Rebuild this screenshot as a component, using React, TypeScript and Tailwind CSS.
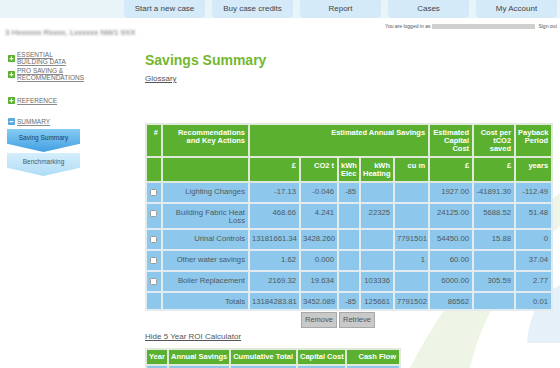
import React from 'react';

const tabs = ['Start a new case', 'Buy case credits', 'Report', 'Cases', 'My Account'];

const rows = [
  { name: ['Lighting Changes'], v: ['-17.13', '-0.046', '-85', '', '', '1927.00', '-41891.30', '-112.49'] },
  { name: ['Building Fabric Heat', 'Loss'], v: ['468.66', '4.241', '', '22325', '', '24125.00', '5688.52', '51.48'] },
  { name: ['Urinal Controls'], v: ['13181661.34', '3428.260', '', '', '7791501', '54450.00', '15.88', '0'] },
  { name: ['Other water savings'], v: ['1.62', '0.000', '', '', '1', '60.00', '', '37.04'] },
  { name: ['Boiler Replacement'], v: ['2169.32', '19.634', '', '103336', '', '6000.00', '305.59', '2.77'] },
];

const totals = ['13184283.81', '3452.089', '-85', '125661', '7791502', '86562', '', '0.01'];

const colWidths = [16, 87, 51, 38, 22, 34, 35, 44, 42, 37];

// celdas de cabecera (verde) y de datos (azul)
const th = 'bg-[#5bb12f] border-2 border-[#dfe9dc] text-white font-bold text-right align-top pt-[4px] pr-[3px] pl-[2px] leading-[8px]';
const td = 'bg-[#8dc7eb] border-2 border-[#e1ebf0] text-[#4f5a60] text-right align-top pt-[5px] pb-[3px] pr-[3px] pl-[2px] leading-[8px]';

const PlusIcon = ({ minus, color }: { minus?: boolean; color: string }) => (
  <svg width="7" height="7" viewBox="0 0 7 7" className="shrink-0">
    <rect x="0" y="0" width="7" height="7" rx="0.8" fill={color} />
    <rect x="1.5" y="3" width="4" height="1.2" fill="#fff" />
    {!minus && <rect x="2.9" y="1.5" width="1.2" height="4" fill="#fff" />}
  </svg>
);

const SideLink = ({ lines, minus, color }: { lines: string[]; minus?: boolean; color: string }) => (
  <div className="flex items-center gap-[2px] ml-[3px]">
    <PlusIcon minus={minus} color={color} />
    <div className="text-[6.5px] leading-[7px] text-[#6a6a6a] uppercase">
      {lines.map(l => (
        <div key={l} className="underline decoration-[#8a8a8a] whitespace-nowrap">{l}</div>
      ))}
    </div>
  </div>
);

const Arrow = ({ label, active }: { label: string; active?: boolean }) => (
  <div
    className={`ml-[2px] w-[73px] h-[23px] pt-[5px] text-center text-[6.5px] leading-[8px] [clip-path:polygon(0_0,100%_0,100%_64%,50%_100%,0_64%)] ${
      active
        ? 'bg-gradient-to-b from-[#86cbf3] to-[#3f9fe2] text-[#1f3f5c]'
        : 'bg-gradient-to-b from-[#d5eefb] to-[#aedcf6] text-[#4a5a66]'
    }`}
  >
    {label}
  </div>
);

export default function App() {
  return (
    <div className="relative w-[560px] h-[368px] overflow-hidden bg-white font-['Liberation_Sans',Arial,sans-serif]">
      {/* fondo decorativo */}
      <svg className="absolute inset-0 pointer-events-none" width="560" height="368" viewBox="0 0 560 368">
        <path d="M565 190 Q470 250 410 368 L470 368 Q490 282 565 222 Z" fill="#eef5e6" />
        <path d="M562 284 Q530 298 527 343 L562 343 Z" fill="#e5f0f8" />
      </svg>

      <div className="relative">
        {/* barra superior */}
        <div className="h-[18px] bg-[#e8f4f8] flex">
          <div className="h-[2px] w-[124px]" />
          <div className="flex gap-[7px]">
            {tabs.map(t => (
              <div key={t} className="w-[81px] h-[18px] rounded-b-[4px] bg-[#d5eaf8] flex items-center justify-center text-[8px] text-[#444]">
                {t}
              </div>
            ))}
          </div>
        </div>

        <div className="flex">
          {/* barra lateral */}
          <div className="w-[145px] shrink-0 pl-[5px]">
            <div className="mt-[11px] h-[8px] text-[8px] leading-[8px] text-[#6f6f6f] blur-[1px] whitespace-nowrap">
              3 Hxxxxxx Rxxxx, Lxxxxxx NW1 9XX
            </div>
            <div className="mt-[14px]">
              <SideLink lines={['Essential', 'Building Data']} color="#5bb12f" />
            </div>
            <div className="mt-[2px]">
              <SideLink lines={['Pro Saving &', 'Recommendations']} color="#5bb12f" />
            </div>
            <div className="mt-[16px]">
              <SideLink lines={['Reference']} color="#5bb12f" />
            </div>
            <div className="mt-[14px]">
              <SideLink lines={['Summary']} minus color="#5aa8de" />
            </div>
            <div className="mt-[4px]">
              <Arrow label="Saving Summary" active />
            </div>
            <div className="mt-[1px]">
              <Arrow label="Benchmarking" />
            </div>
          </div>

          {/* contenido principal */}
          <div className="flex-1 min-w-0">
            <div className="mt-[5px] h-[6px] pl-[240px] flex items-center gap-[2px] text-[5px] leading-[6px] text-[#555] whitespace-nowrap overflow-hidden">
              <span>You are logged in as</span>
              <span className="inline-block w-[103px] h-[5px] bg-[#cfcfcf] blur-[0.6px]" />
              <span className="underline ml-[1px]">Sign out</span>
            </div>

            <h1 className="mt-[23px] text-[14px] leading-[16px] font-bold text-[#73b72f]">Savings Summary</h1>
            <div className="mt-[6px] text-[8px] leading-[10px] text-[#555] underline">Glossary</div>

            <table className="mt-[39px] table-fixed border-collapse w-[406px]">
              <colgroup>
                {colWidths.map((w, i) => (
                  <col key={i} style={{ width: w }} />
                ))}
              </colgroup>
              <thead className="text-[7.5px]">
                <tr className="h-[33px]">
                  <th className={th}>#</th>
                  <th className={th}>Recommendations<br />and Key Actions</th>
                  <th className={th} colSpan={5}>Estimated Annual Savings</th>
                  <th className={th}>Estimated<br />Capital<br />Cost</th>
                  <th className={th}>Cost per<br />tCO2<br />saved</th>
                  <th className={th}>Payback<br />Period</th>
                </tr>
                <tr className="h-[25px]">
                  <th className={th}></th>
                  <th className={th}></th>
                  <th className={th}>£</th>
                  <th className={th}>CO2 t</th>
                  <th className={th}>kWh<br />Elec</th>
                  <th className={th}>kWh<br />Heating</th>
                  <th className={th}>cu m</th>
                  <th className={th}>£</th>
                  <th className={th}>£</th>
                  <th className={th}>years</th>
                </tr>
              </thead>
              <tbody className="text-[7.7px]">
                {rows.map(r => (
                  <tr key={r.name[0]} className={r.name.length > 1 ? 'h-[26px]' : 'h-[21px]'}>
                    <td className={`${td} !text-center`}>
                      <span className="inline-block w-[7px] h-[7px] mt-[1px] bg-white border border-[#9a9a9a] rounded-[1.5px]" />
                    </td>
                    <td className={td}>
                      {r.name.map(n => (
                        <div key={n}>{n}</div>
                      ))}
                    </td>
                    {r.v.map((v, i) => (
                      <td key={i} className={`${td} whitespace-nowrap`}>{v}</td>
                    ))}
                  </tr>
                ))}
                <tr className="h-[18px]">
                  <td className={td}></td>
                  <td className={td}>Totals</td>
                  {totals.map((v, i) => (
                    <td key={i} className={`${td} whitespace-nowrap`}>{v}</td>
                  ))}
                </tr>
              </tbody>
            </table>

            <div className="mt-[1px] ml-[156px] flex gap-[2px]">
              <button className="w-[36px] h-[16px] bg-[#c9c9c9] border border-[#a9a9a9] text-[7.5px] text-[#555]">Remove</button>
              <button className="w-[36px] h-[16px] bg-[#c9c9c9] border border-[#a9a9a9] text-[7.5px] text-[#555]">Retrieve</button>
            </div>

            <div className="mt-[4px] text-[8px] leading-[10px] text-[#555] underline">Hide 5 Year ROI Calculator</div>

            <table className="mt-[6px] table-fixed border-collapse w-[254px] text-[7.5px]">
              <colgroup>
                {[22, 62, 67, 49, 54].map((w, i) => (
                  <col key={i} style={{ width: w }} />
                ))}
              </colgroup>
              <thead>
                <tr className="h-[16px]">
                  {['Year', 'Annual Savings', 'Cumulative Total', 'Capital Cost', 'Cash Flow'].map(h => (
                    <th key={h} className={`${th} !pt-[3px] whitespace-nowrap`}>{h}</th>
                  ))}
                </tr>
              </thead>
              <tbody>
                <tr className="h-[20px]">
                  {[0, 1, 2, 3, 4].map(i => (
                    <td key={i} className={td}></td>
                  ))}
                </tr>
              </tbody>
            </table>
          </div>
        </div>
      </div>
    </div>
  );
}
